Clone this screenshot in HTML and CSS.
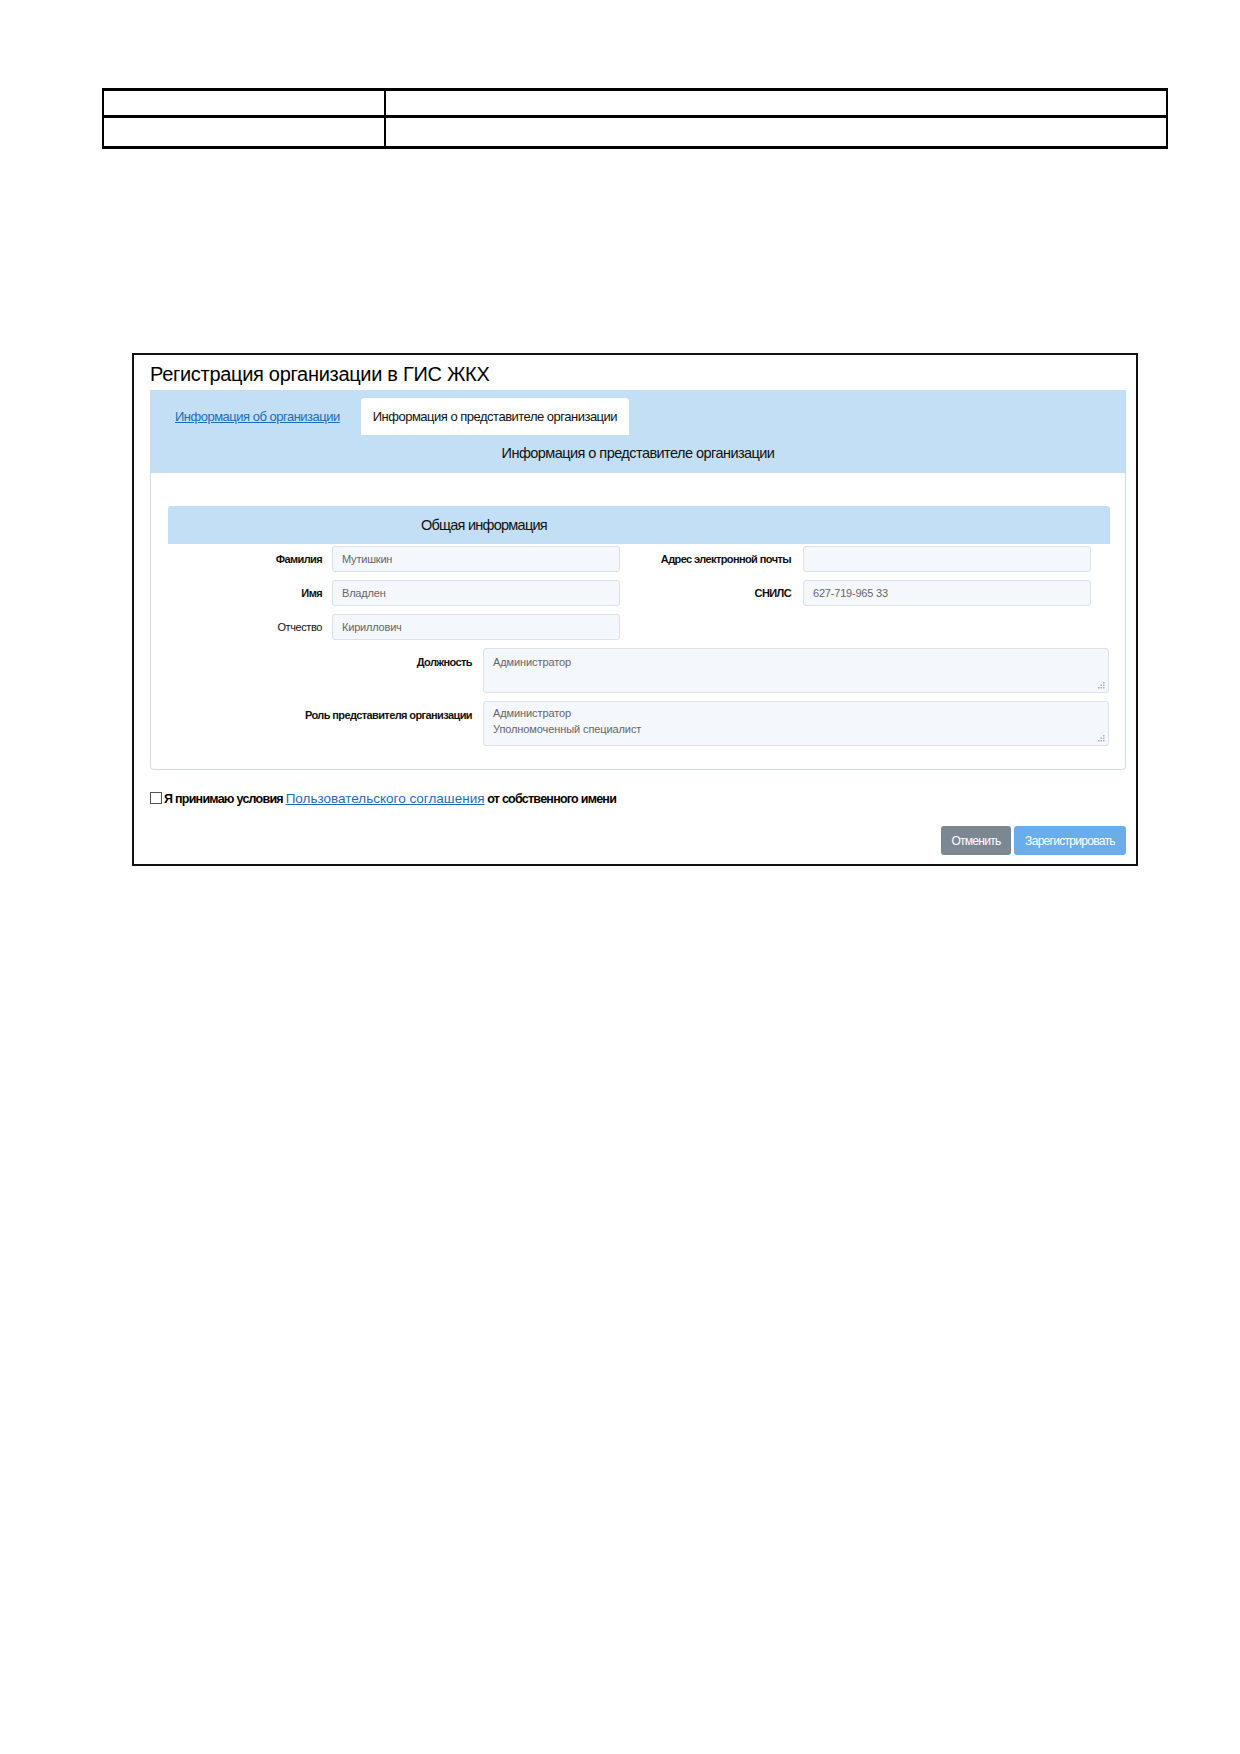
FILE: index.html
```html
<!DOCTYPE html>
<html lang="ru">
<head>
    <meta charset="UTF-8">
    <meta name="viewport" content="width=device-width, initial-scale=1.0">
    <title>Регистрация организации в ГИС ЖКХ</title>
    <link rel="stylesheet" href="styles.css">
</head>
<body>
    <table class="doc-table">
        <tr class="row-top">
            <td class="cell-key"></td>
            <td></td>
        </tr>
        <tr class="row-bottom">
            <td class="cell-key"></td>
            <td></td>
        </tr>
    </table>

    <div class="shot">
        <h1 class="shot-title">Регистрация организации в ГИС ЖКХ</h1>

        <div class="tabs-bar">
            <div class="tabs">
                <a href="#" class="tab-link">Информация об организации</a>
                <span class="tab active">Информация о представителе организации</span>
            </div>
            <div class="bar-caption">Информация о представителе организации</div>
        </div>

        <div class="panel">
            <div class="section-head">Общая информация</div>

            <div class="fields">
                <span class="label">Фамилия</span>
                <div class="input">Мутишкин</div>
                <span class="label label-right">Адрес электронной почты</span>
                <div class="input"></div>

                <span class="label">Имя</span>
                <div class="input">Владлен</div>
                <span class="label label-right">СНИЛС</span>
                <div class="input">627-719-965 33</div>

                <span class="label label-light">Отчество</span>
                <div class="input">Кириллович</div>
            </div>

            <div class="wide-fields">
                <span class="label">Должность</span>
                <div class="area">
                    Администратор
                    <svg class="grip" width="7" height="7" viewBox="0 0 7 7">
                        <rect x="5" y="0" width="1.5" height="1.5"/>
                        <rect x="2.5" y="2.5" width="1.5" height="1.5"/>
                        <rect x="5" y="2.5" width="1.5" height="1.5"/>
                        <rect x="0" y="5" width="1.5" height="1.5"/>
                        <rect x="2.5" y="5" width="1.5" height="1.5"/>
                        <rect x="5" y="5" width="1.5" height="1.5"/>
                    </svg>
                </div>

                <span class="label">Роль представителя организации</span>
                <div class="area area-list">
                    Администратор<br>
                    Уполномоченный специалист
                    <svg class="grip" width="7" height="7" viewBox="0 0 7 7">
                        <rect x="5" y="0" width="1.5" height="1.5"/>
                        <rect x="2.5" y="2.5" width="1.5" height="1.5"/>
                        <rect x="5" y="2.5" width="1.5" height="1.5"/>
                        <rect x="0" y="5" width="1.5" height="1.5"/>
                        <rect x="2.5" y="5" width="1.5" height="1.5"/>
                        <rect x="5" y="5" width="1.5" height="1.5"/>
                    </svg>
                </div>
            </div>
        </div>

        <label class="agree">
            <span class="check"></span>
            <span>Я принимаю условия <a href="#" class="agree-link">Пользовательского соглашения</a> от собственного имени</span>
        </label>

        <div class="actions">
            <button class="btn btn-cancel">Отменить</button>
            <button class="btn btn-submit">Зарегистрировать</button>
        </div>
    </div>
</body>
</html>
```

FILE: styles.css
```css
*{
    padding: 0;
    margin: 0;
    box-sizing: border-box;
}
body{
    background-color: #fff;
    font-family: "Liberation Sans", Arial, sans-serif;
    color: #111;
}

/* empty two-row table at the top of the sheet */
.doc-table{
    margin: 88px 0 0 102px;
    width: 1066px;
    border-collapse: collapse;
}
.doc-table td{
    border: 2px solid #000;
}
.doc-table .cell-key{
    width: 282px;
}
.doc-table .row-top td{
    height: 27px;
    border-top-width: 3px;
    border-bottom-width: 3px;
}
.doc-table .row-bottom td{
    height: 31px;
    border-bottom-width: 3px;
}

/* framed form screenshot */
.shot{
    width: 1006px;
    height: 513px;
    margin: 204px 0 0 132px;
    padding: 7px 10px 0 16px;
    border: 2px solid #111;
}
.shot-title{
    font-size: 20px;
    font-weight: normal;
    line-height: 24px;
    letter-spacing: -0.3px;
    margin-bottom: 4px;
    color: #000;
}

.tabs-bar{
    background-color: #c3dff5;
    height: 83px;
}
.tabs{
    display: flex;
    align-items: flex-end;
    gap: 9px;
    height: 45px;
    padding-left: 13px;
}
.tab-link,
.tab{
    height: 37px;
    line-height: 37px;
    padding: 0 12px;
    font-size: 13px;
    letter-spacing: -0.5px;
}
.tab-link{
    color: #1b6db3;
    text-decoration: underline;
}
.tab.active{
    background-color: #fff;
    border-radius: 4px 4px 0 0;
    color: #111;
}
.bar-caption{
    margin-top: 8px;
    text-align: center;
    font-size: 14.5px;
    line-height: 20px;
    letter-spacing: -0.55px;
}

.panel{
    height: 297px;
    padding: 33px 15px 0 17px;
    border: 1px solid #cddce8;
    border-top: none;
    border-radius: 0 0 4px 4px;
}
.section-head{
    height: 38px;
    line-height: 38px;
    padding-left: 253px;
    margin-bottom: 2px;
    background-color: #c3dff5;
    border-radius: 3px 3px 0 0;
    font-size: 14.5px;
    letter-spacing: -0.75px;
}

/* field captions are set tight, like a narrow face */
.label{
    font-size: 11px;
    font-weight: bold;
    letter-spacing: -0.6px;
    text-align: right;
    color: #111;
}
.label-light{
    font-weight: normal;
    letter-spacing: -0.4px;
}

.fields{
    display: grid;
    grid-template-columns: 164px 288px 183px 288px;
    grid-auto-rows: 26px;
    row-gap: 8px;
}
.fields .label{
    line-height: 26px;
    padding-right: 10px;
}
.fields .label-right{
    padding-right: 12px;
}
.input{
    height: 26px;
    line-height: 24px;
    padding: 0 9px;
    background-color: #f4f7fb;
    border: 1px solid #dbe1e8;
    border-radius: 3px;
    font-size: 11px;
    letter-spacing: -0.2px;
    color: #666;
}

.wide-fields{
    display: grid;
    grid-template-columns: 315px 626px;
    grid-template-rows: 45px 45px;
    row-gap: 8px;
    margin-top: 8px;
}
.wide-fields .label{
    padding: 7px 11px 0 0;
    line-height: 14px;
}
.area{
    position: relative;
    padding: 6px 9px 0;
    line-height: 14px;
    background-color: #f4f7fb;
    border: 1px solid #dbe1e8;
    border-radius: 3px;
    font-size: 11px;
    letter-spacing: -0.1px;
    color: #666;
}
.area-list{
    padding-top: 4px;
    line-height: 15.5px;
}
.grip{
    position: absolute;
    right: 3px;
    bottom: 3px;
    fill: #a9aeb3;
}

.agree{
    display: flex;
    align-items: center;
    gap: 2px;
    margin-top: 20px;
    height: 16px;
    font-size: 12.5px;
    font-weight: bold;
    letter-spacing: -0.75px;
    color: #000;
}
.check{
    width: 12px;
    height: 12px;
    border: 1px solid #555;
    background-color: #fff;
}
.agree-link{
    font-size: 13.5px;
    font-weight: normal;
    letter-spacing: 0;
    color: #1b6db3;
    text-decoration: underline;
}

.actions{
    display: flex;
    justify-content: flex-end;
    gap: 3px;
    margin-top: 20px;
}
.btn{
    height: 29px;
    padding: 0 4px;
    border: none;
    border-radius: 3px;
    font-family: "Liberation Sans", Arial, sans-serif;
    font-size: 12px;
    letter-spacing: -0.7px;
    color: #fff;
}
.btn-cancel{
    width: 70px;
    background-color: #7b8892;
}
.btn-submit{
    width: 112px;
    background-color: #6badea;
}
```
